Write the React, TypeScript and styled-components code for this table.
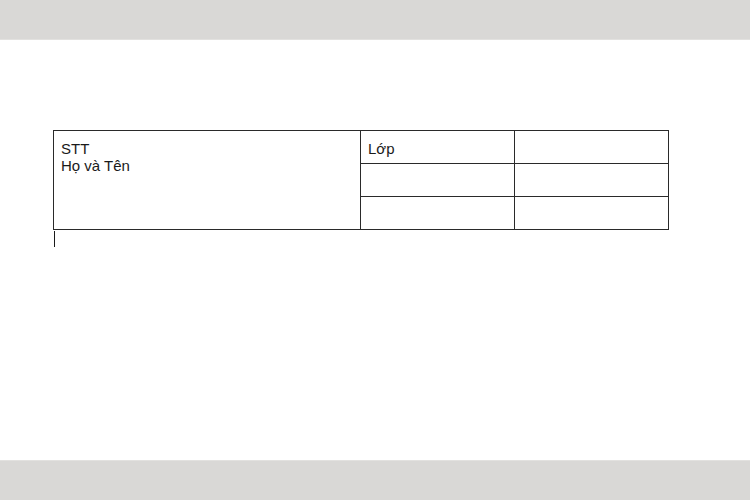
import React from "react";
import styled, { createGlobalStyle } from "styled-components";

const Global = createGlobalStyle`
  html, body { margin: 0; padding: 0; background: #ffffff; }
  body { font-family: "Liberation Sans", Arial, sans-serif; }
`;

const Page = styled.div`
  width: 750px;
  height: 500px;
  display: flex;
  flex-direction: column;
  background: #ffffff;
`;

const Bar = styled.div<{ $edge: "top" | "bottom" }>`
  height: 40px;
  flex: 0 0 40px;
  background: #d9d8d6;
  box-sizing: border-box;
  ${(p) => (p.$edge === "top" ? "border-bottom: 1px solid #e2e1df;" : "border-top: 1px solid #e2e1df;")}
`;

const Doc = styled.div`
  flex: 1;
  padding: 90px 0 0 53px;
  box-sizing: border-box;
`;

const Grid = styled.div`
  display: grid;
  grid-template-columns: 307px 154px 154px;
  grid-template-rows: 33px 33px 33px;
  width: fit-content;
  border-left: 1px solid #2a2a2a;
  border-top: 1px solid #2a2a2a;
`;

const Cell = styled.div<{ $span?: number }>`
  box-sizing: border-box;
  border-right: 1px solid #2a2a2a;
  border-bottom: 1px solid #2a2a2a;
  padding: 9px 7px 0 7px;
  font-size: 15px;
  line-height: 17px;
  color: #1a1a1a;
  ${(p) => (p.$span ? `grid-row: span ${p.$span};` : "")}
`;

const Caret = styled.div`
  width: 1px;
  height: 16px;
  margin: 1px 0 0 1px;
  background: #1a1a1a;
`;

export default function App() {
  return (
    <Page>
      <Global />
      <Bar $edge="top" />
      <Doc>
        <Grid>
          <Cell $span={3}>
            STT
            <br />
            Họ và Tên
          </Cell>
          <Cell>Lớp</Cell>
          <Cell />
          <Cell />
          <Cell />
          <Cell />
          <Cell />
        </Grid>
        <Caret />
      </Doc>
      <Bar $edge="bottom" />
    </Page>
  );
}
